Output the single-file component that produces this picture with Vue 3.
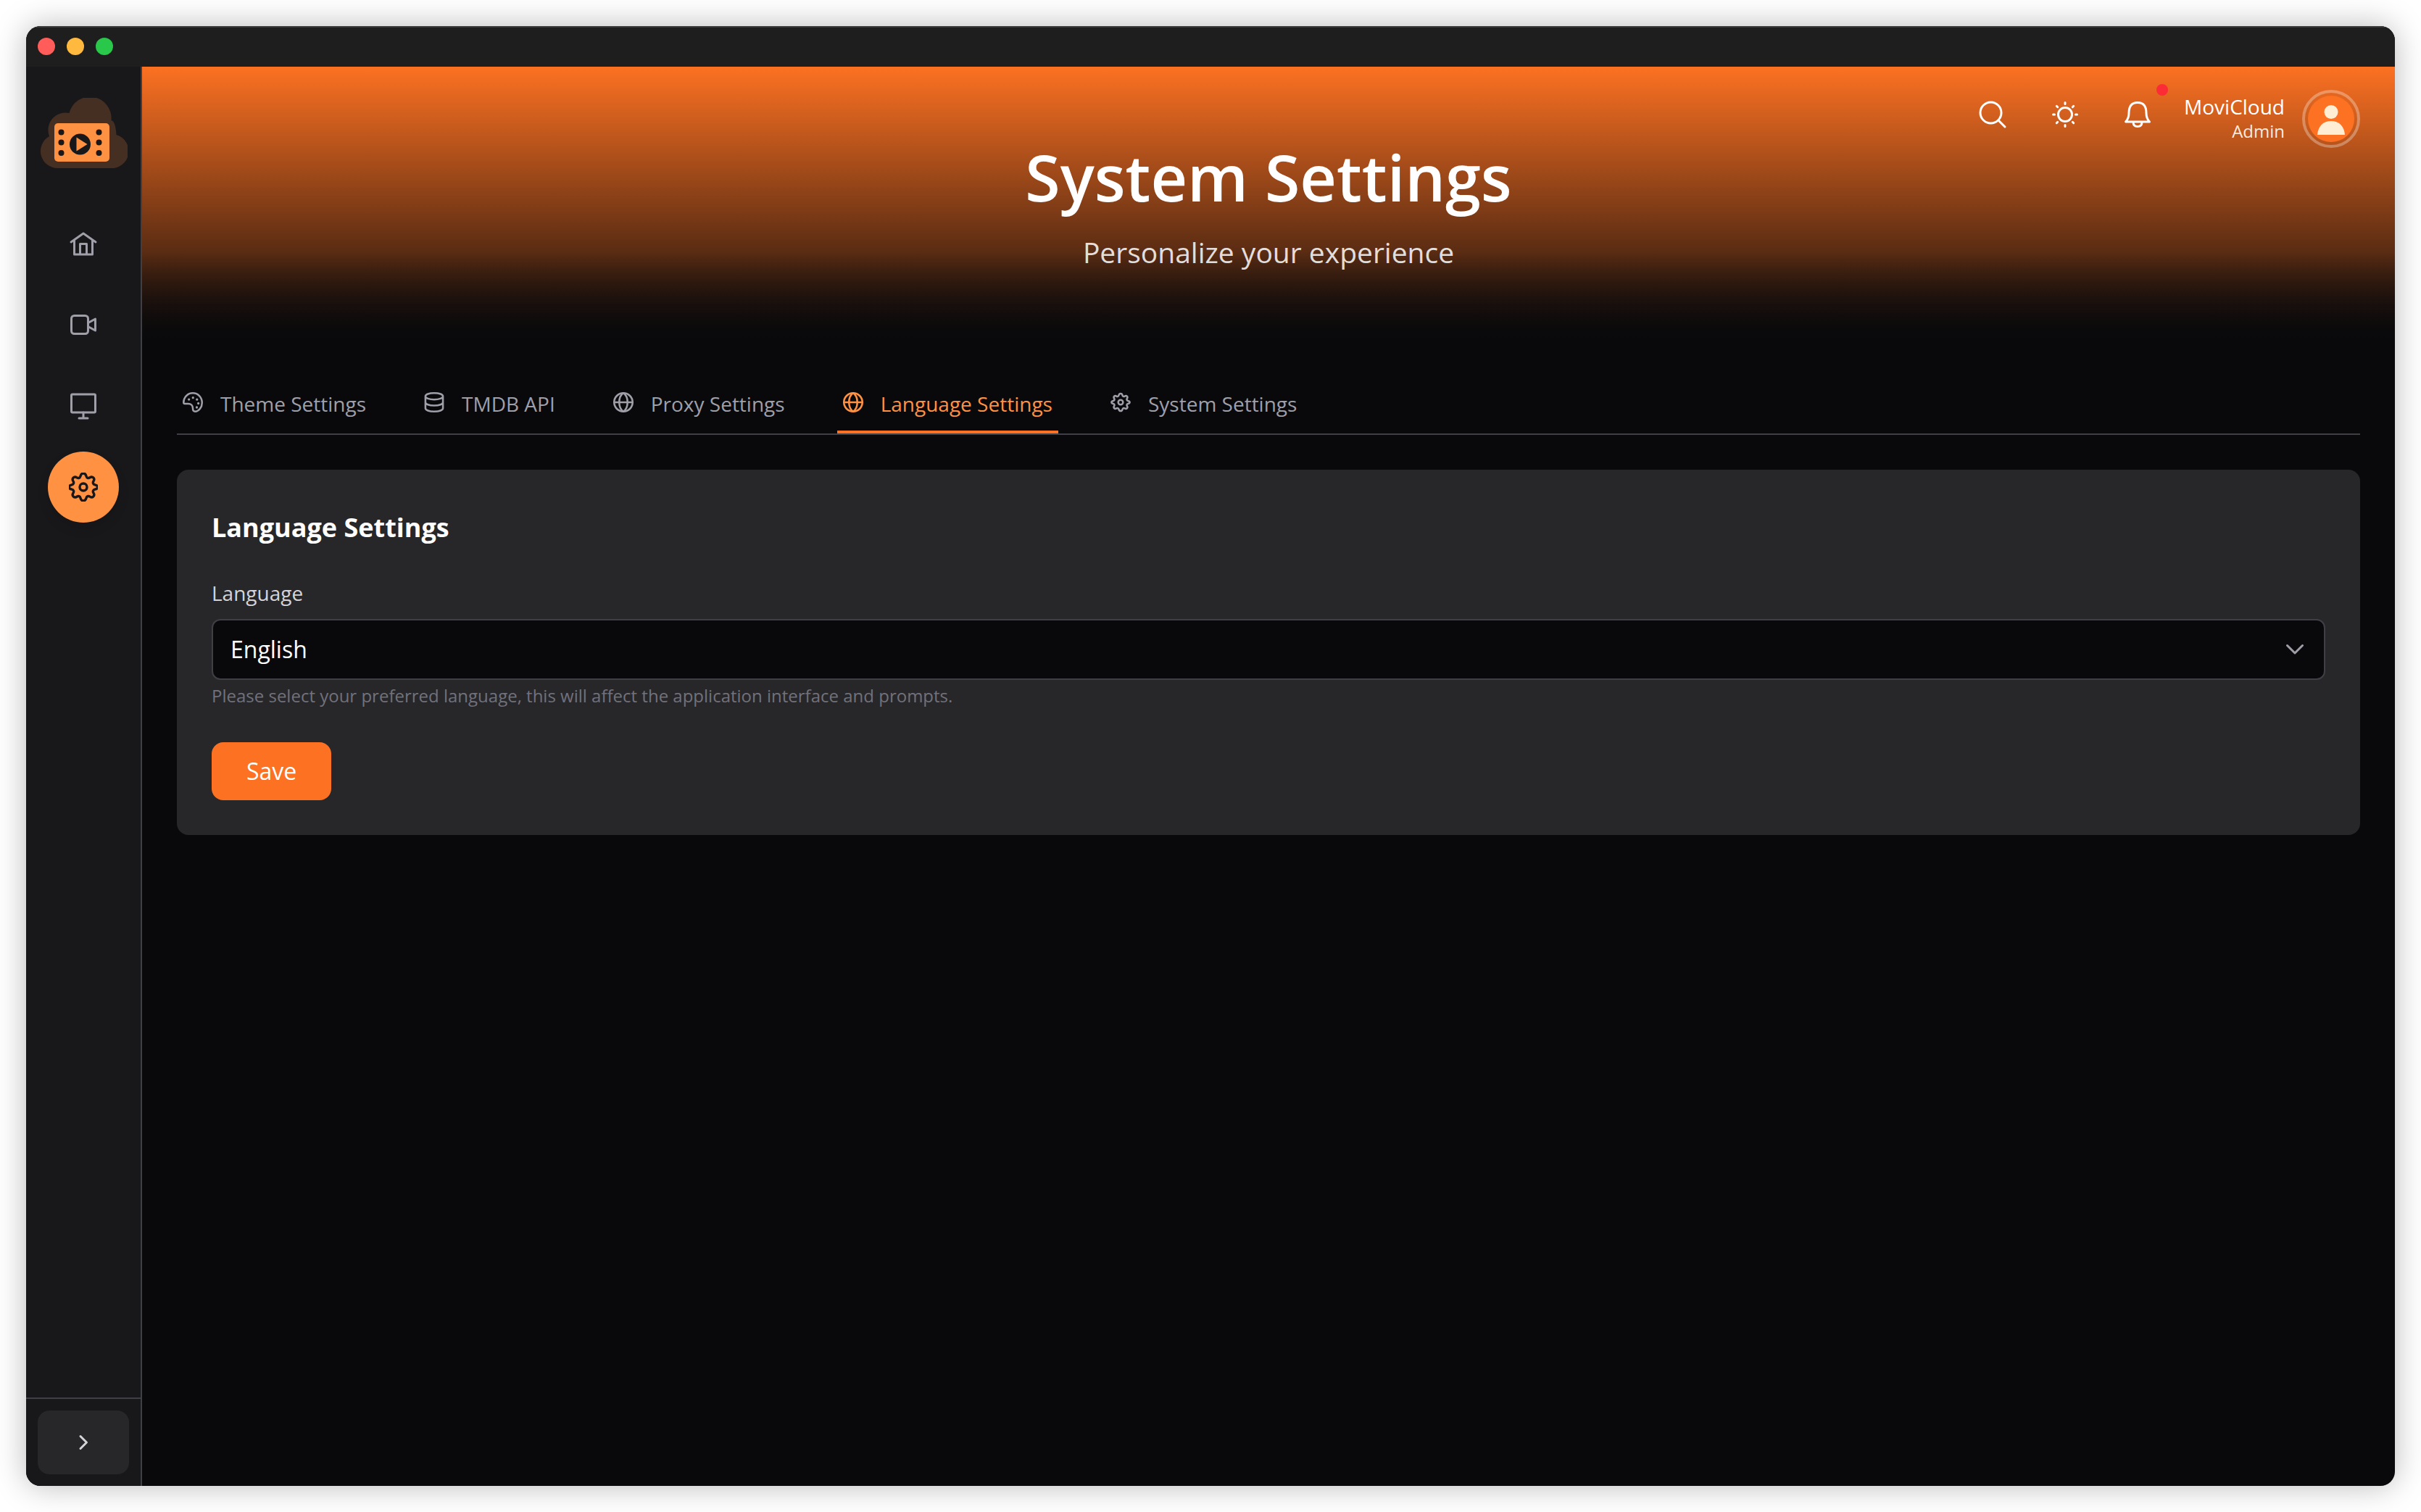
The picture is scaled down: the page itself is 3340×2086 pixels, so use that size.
<script setup>
import { ref } from 'vue'

const language = ref('en')
const gear =
  'M12 2.5c1 0 1.700.7 2 1.900.3 1.300 1.400 1.700 2.500 1 .9-.6 1.700-.6 2.400.1s.7 1.500.1 2.400c-.7 1.100-.3 2.200 1 2.500 1.200.3 1.900.9 1.900 1.600s-.7 1.300-1.900 1.600c-1.300.3-1.700 1.400-1 2.500.6.9.6 1.700-.1 2.400s-1.500.7-2.400.1c-1.100-.7-2.200-.3-2.500 1-.3 1.200-1 1.900-2 1.900s-1.700-.7-2-1.900c-.3-1.300-1.400-1.700-2.500-1-.9.6-1.700.6-2.400-.1s-.7-1.500-.1-2.400c.7-1.100.3-2.200-1-2.500C2.800 13.300 2.100 12.700 2.100 12s.7-1.300 1.900-1.600c1.300-.3 1.700-1.400 1-2.500-.6-.9-.6-1.700.1-2.400s1.500-.7 2.400-.1c1.100.7 2.200.3 2.500-1 .3-1.200 1-1.900 2-1.900z'
const tabs = [
  { id: 'theme', label: 'Theme Settings' },
  { id: 'database', label: 'TMDB API' },
  { id: 'globe', label: 'Proxy Settings' },
  { id: 'globe', label: 'Language Settings', active: true },
  { id: 'gear', label: 'System Settings' },
]
</script>

<template>
  <div class="window">
    <div class="titlebar"><i class="red"></i><i class="yellow"></i><i class="green"></i></div>
    <div class="body">
      <aside class="sidebar">
        <svg class="logo" viewBox="0 0 120 98">
          <path fill="#452e22" d="M24 97a23.500 23.500 0 0 1-12-44A24 24 0 0 1 39.500 21a29.500 29.500 0 0 1 58 10c5 1 6.500 11 7 20A23.500 23.500 0 0 1 96 97z" />
          <rect x="19" y="35" width="76" height="53" rx="5" fill="#ff9142" />
          <g fill="#18181b">
            <circle cx="28.500" cy="47.500" r="4" /><circle cx="28.500" cy="61.500" r="4" /><circle cx="28.500" cy="76" r="4" />
            <circle cx="80.500" cy="47.500" r="4" /><circle cx="80.500" cy="61.500" r="4" /><circle cx="80.500" cy="76" r="4" />
            <circle cx="54.500" cy="64" r="14.500" />
          </g>
          <path fill="#ff9142" d="M49.500 54.500v19l15-9.500z" />
        </svg>
        <nav>
          <a href="#" aria-label="Home">
            <svg viewBox="0 0 40 40"><path d="M3 18 20 6l17 12M7.500 15v20h25V15M15.500 35V20.500h9V35" /></svg>
          </a>
          <a href="#" aria-label="Movies">
            <svg viewBox="0 0 40 40"><rect x="3.500" y="7.500" width="23" height="25" rx="4" /><path d="m26.500 17.500 10-5.500v16l-10-5.500" /></svg>
          </a>
          <a href="#" aria-label="Devices">
            <svg viewBox="0 0 40 40"><rect x="3.500" y="4" width="33" height="25" rx="1.500" /><path d="M20 29v8M14 37h12" /></svg>
          </a>
          <a href="#" class="current" aria-label="Settings">
            <svg viewBox="2 2 20 20"><path stroke-width="1.700" :d="gear" /><circle cx="12" cy="12" r="2.500" stroke-width="1.700" /></svg>
          </a>
        </nav>
        <div class="expand">
          <button aria-label="Expand sidebar">
            <svg viewBox="0 0 24 24"><path d="m8 3.500 8.500 8.500L8 20.500" /></svg>
          </button>
        </div>
      </aside>

      <main>
        <header class="hero">
          <div class="tools">
            <button aria-label="Search"><svg viewBox="0 0 40 40"><circle cx="17.500" cy="17.500" r="14.500" /><path d="m28 28 9 9" /></svg></button>
            <button aria-label="Light mode"><svg viewBox="0 0 40 40"><circle cx="20" cy="20" r="9.500" /><path d="M20 3.500v2M20 34.500v2M3.500 20h2M34.500 20h2M8.300 8.300l1.400 1.400M30.300 30.300l1.400 1.400M8.300 31.700l1.400-1.400M30.300 9.700l1.400-1.400" /></svg></button>
            <button aria-label="Notifications" class="bell"><svg viewBox="0 0 40 40"><path d="M3.500 30h33c-3-3-4.500-6-4.500-12 0-10-4-14.500-12-14.500S8 8 8 18c0 6-1.500 9-4.500 12zM14 30.500c0 4 2.500 6 6 6s6-2 6-6" /></svg><b></b></button>
            <div class="user"><span>MoviCloud</span><small>Admin</small></div>
            <svg class="avatar" viewBox="0 0 80 80">
              <circle cx="40" cy="40" r="38" fill="none" stroke="#fff" stroke-opacity=".3" stroke-width="4" />
              <circle cx="40" cy="40" r="32" fill="#fc7122" />
              <circle cx="40" cy="30.500" r="9.500" fill="#ffedd4" /><path fill="#ffedd4" d="M21 62c1-12 8-19 19-19s18 7 19 19z" />
            </svg>
          </div>
          <h1>System Settings</h1>
          <p>Personalize your experience</p>
        </header>

        <div class="content">
          <nav class="tabs">
            <button v-for="tab in tabs" :key="tab.label" :class="{ active: tab.active }">
              <svg viewBox="1 1 22 22">
                <template v-if="tab.id === 'theme'">
                  <path d="M2 12.500C2 6.500 6.500 2 12 2s10 4.500 10 10.500c0 5-3.500 9.500-7.500 9.500-2 0-2.500-1.500-2.500-3.500 0-3-2-5-5-5-2 0-5 .5-5-1z" />
                  <path stroke-width="2.600" d="M7.800 8.900h.01M12.200 7h.01M16.500 9h.01M18 13.200h.01M16.300 17.500h.01" />
                </template>
                <path v-else-if="tab.id === 'database'" d="M2.500 5.500C2.500 3.500 6.500 2 12 2s9.500 1.500 9.500 3.500S17.500 9 12 9 2.500 7.500 2.500 5.500zv13C2.500 20.500 6.500 22 12 22s9.500-1.500 9.500-3.500v-13M2.500 12c0 2 4 3.500 9.500 3.500s9.500-1.500 9.500-3.500" />
                <template v-else-if="tab.id === 'globe'">
                  <circle cx="12" cy="12" r="10" /><path d="M2 12h20M12 2c-3 2-4.500 5.500-4.500 10s1.500 8 4.500 10c3-2 4.500-5.500 4.500-10S15 4 12 2z" />
                </template>
                <template v-else><path :d="gear" /><circle cx="12" cy="12" r="2.600" /></template>
              </svg>
              {{ tab.label }}
            </button>
          </nav>

          <section class="card">
            <h2>Language Settings</h2>
            <label for="language">Language</label>
            <div class="select">
              <select id="language" v-model="language"><option value="en">English</option></select>
              <svg viewBox="0 0 24 24"><path d="m1.500 6.500 10.500 10.500L22.500 6.500" /></svg>
            </div>
            <p>Please select your preferred language, this will affect the application interface and prompts.</p>
            <button class="save">Save</button>
          </section>
        </div>
      </main>
    </div>
  </div>
</template>

<style>
body {
  background: #fff;
}
</style>

<style scoped>
* {
  box-sizing: border-box;
}
button,
select {
  font: inherit;
  border: 0;
  background: none;
  padding: 0;
}
svg {
  display: block;
  fill: none;
  stroke: currentColor;
  stroke-width: 3;
  stroke-linecap: round;
  stroke-linejoin: round;
}
h1,
h2,
p {
  margin: 0;
}
.window {
  margin: 36px;
  min-height: calc(100vh - 72px);
  display: flex;
  flex-direction: column;
  border-radius: 20px;
  overflow: hidden;
  background: #09090b;
  color: #fff;
  font-family: "Open Sans", sans-serif;
  font-size: 28px;
  box-shadow: 0 0 44px rgba(0, 0, 0, 0.28);
}
.titlebar {
  height: 56px;
  padding-left: 16px;
  display: flex;
  align-items: center;
  gap: 16px;
  background: #1e1e1e;
  box-shadow: inset 0 2px #3a3a3a;
}
.titlebar i {
  width: 24px;
  height: 24px;
  border-radius: 50%;
}
.red {
  background: #ff5c5a;
}
.yellow {
  background: #ffb93e;
}
.green {
  background: #29c84a;
}
.body {
  flex: 1;
  display: flex;
}
.sidebar {
  width: 160px;
  flex: none;
  display: flex;
  flex-direction: column;
  background: #18181b;
  border-right: 2px solid #3f3f46;
  color: #9f9fa9;
}
.logo {
  width: 120px;
  height: 98px;
  margin: 43px 0 0 20px;
  stroke: none;
}
.sidebar nav {
  flex: 1;
  display: flex;
  flex-direction: column;
  align-items: center;
  gap: 14px;
  padding-top: 54px;
}
.sidebar nav a {
  width: 98px;
  height: 98px;
  border-radius: 50%;
  display: flex;
  align-items: center;
  justify-content: center;
  color: #9f9fa9;
}
.sidebar nav svg {
  width: 40px;
  height: 40px;
}
.sidebar nav a.current {
  background: #ff9142;
  color: #18181b;
  box-shadow: 0 8px 16px rgba(0, 0, 0, 0.1);
}
.expand {
  border-top: 2px solid #3f3f46;
  padding: 16px;
}
.expand button {
  width: 100%;
  height: 88px;
  border-radius: 16px;
  background: #27272a;
  color: #d4d4d8;
  display: flex;
  align-items: center;
  justify-content: center;
}
.expand svg {
  width: 24px;
  height: 24px;
}
main {
  flex: 1;
  min-width: 0;
}
.hero {
  position: relative;
  height: 384px;
  padding-top: 104px;
  text-align: center;
  background:
    linear-gradient(to top, #09090b, rgba(9, 9, 11, 0)) bottom / 100% 128px no-repeat,
    linear-gradient(#fc7122, #09090b);
}
.hero h1 {
  font-size: 88px;
  line-height: 96px;
  font-weight: 600;
}
.hero p {
  margin-top: 28px;
  font-size: 39px;
  line-height: 56px;
  color: rgba(255, 255, 255, 0.85);
}
.tools {
  position: absolute;
  top: 32px;
  right: 48px;
  display: flex;
  align-items: flex-start;
}
.tools button {
  position: relative;
  width: 80px;
  height: 68px;
  margin-right: 20px;
  display: flex;
  align-items: center;
  justify-content: center;
  color: #fff;
}
.tools button svg {
  width: 40px;
  height: 40px;
}
.tools .bell {
  margin-right: 24px;
}
.bell b {
  position: absolute;
  top: -8px;
  right: -2px;
  width: 16px;
  height: 16px;
  border-radius: 50%;
  background: #fb2c36;
}
.user {
  height: 80px;
  display: flex;
  flex-direction: column;
  justify-content: center;
  text-align: right;
  line-height: 34px;
}
.user small {
  font-size: 24px;
  color: rgba(255, 255, 255, 0.9);
}
.avatar {
  width: 80px;
  height: 80px;
  margin-left: 24px;
  stroke: none;
}
.content {
  padding: 48px;
}
.tabs {
  display: flex;
  gap: 64px;
  border-bottom: 2px solid #3f3f46;
}
.tabs button {
  height: 74px;
  padding: 0 8px 4px;
  border-bottom: 4px solid transparent;
  display: flex;
  align-items: center;
  gap: 24px;
  color: #9f9fa9;
}
.tabs button svg {
  width: 28px;
  height: 28px;
  margin-bottom: 4px;
  stroke-width: 2;
}
.tabs .active {
  color: #ff9142;
  border-color: #fc7122;
}
.card {
  margin-top: 48px;
  padding: 52px 48px 48px;
  border-radius: 16px;
  background: #27272a;
  display: flex;
  flex-direction: column;
  align-items: flex-start;
}
.card h2 {
  font-size: 36px;
  line-height: 56px;
  font-weight: 700;
}
.card label {
  margin-top: 42px;
  line-height: 40px;
  color: #d4d4d8;
}
.select {
  position: relative;
  width: 100%;
  margin-top: 16px;
}
.select select {
  appearance: none;
  width: 100%;
  height: 84px;
  padding: 0 24px 2px;
  border: 2px solid #3f3f46;
  border-radius: 12px;
  background: #09090b;
  color: #fff;
  font-size: 32px;
}
.select svg {
  position: absolute;
  right: 30px;
  top: 30px;
  width: 24px;
  height: 24px;
  color: #9f9fa9;
}
.card p {
  margin-top: 6px;
  font-size: 24px;
  line-height: 32px;
  color: #71717b;
}
.save {
  margin-top: 48px;
  padding: 0 48px 2px;
  height: 80px;
  border-radius: 16px;
  background: #fc7122;
  color: #fff;
  font-size: 32px;
}
</style>
